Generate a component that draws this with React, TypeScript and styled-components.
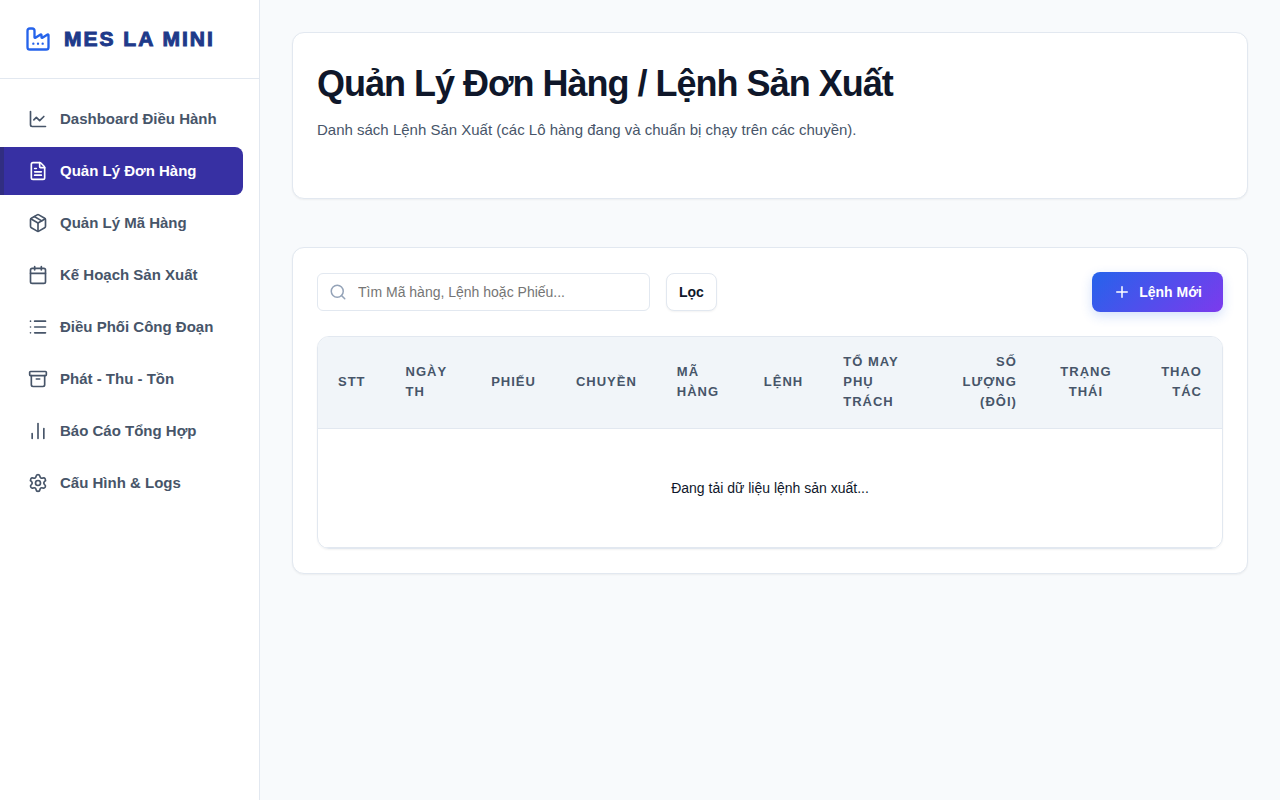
import React from "react";
import styled, { createGlobalStyle } from "styled-components";
import {
  Archive,
  Calendar,
  ChartLine,
  ChartNoAxesColumn,
  FileText,
  List,
  Package,
  Plus,
  Search,
  Settings,
} from "lucide-react";

const GlobalStyle = createGlobalStyle`
  *, *::before, *::after { box-sizing: border-box; }
  body {
    margin: 0;
    background: #f8fafc;
    color: #0f172a;
    font-family: "Liberation Sans", Arial, sans-serif;
    font-size: 15px;
    line-height: 24px;
  }
  button, input { font-family: inherit; }
`;

const Layout = styled.div`
  display: flex;
  min-height: 100vh;
`;

const Sidebar = styled.aside`
  flex: 0 0 260px;
  background: #ffffff;
  border-right: 1px solid #e2e8f0;
`;

const Brand = styled.div`
  display: flex;
  align-items: center;
  gap: 12px;
  padding: 24px;
  border-bottom: 1px solid #e2e8f0;
  color: #2563eb;
`;

const BrandName = styled.span`
  color: #1e3a8a;
  font-size: 21px;
  font-weight: 900;
  line-height: 30px;
  letter-spacing: 2px;
  white-space: nowrap;
  -webkit-text-stroke: 1px currentColor;
`;

const Nav = styled.nav`
  display: flex;
  flex-direction: column;
  gap: 4px;
  padding: 16px 16px 16px 0;
`;

const NavLink = styled.a<{ $active?: boolean }>`
  display: flex;
  align-items: center;
  gap: 12px;
  padding: 12px 24px;
  border-left: 4px solid ${(p) => (p.$active ? "#312e81" : "transparent")};
  border-radius: 0 8px 8px 0;
  background: ${(p) => (p.$active ? "#3730a3" : "transparent")};
  color: ${(p) => (p.$active ? "#ffffff" : "#475569")};
  font-weight: 600;
  text-decoration: none;
  white-space: nowrap;
`;

const Main = styled.main`
  flex: 1;
  min-width: 0;
  display: flex;
  flex-direction: column;
  gap: 48px;
  padding: 32px;
`;

const Card = styled.section`
  padding: 24px;
  background: #ffffff;
  border: 1px solid #e2e8f0;
  border-radius: 12px;
  box-shadow: 0 1px 2px rgba(0, 0, 0, 0.05);
`;

const PageHeader = styled(Card)`
  padding-bottom: 56px;
`;

const Title = styled.h1`
  margin: 0 0 8px;
  font-size: 36px;
  font-weight: 800;
  line-height: 53px;
  letter-spacing: -1px;
`;

const Subtitle = styled.p`
  margin: 0;
  color: #475569;
`;

const Toolbar = styled.div`
  display: flex;
  align-items: center;
  gap: 16px;
  margin-bottom: 24px;
`;

const SearchBox = styled.label`
  display: flex;
  align-items: center;
  gap: 11px;
  flex: 0 1 333px;
  height: 38px;
  padding: 0 11px;
  border: 1px solid #e2e8f0;
  border-radius: 6px;
  color: #94a3b8;
`;

const SearchInput = styled.input`
  flex: 1;
  min-width: 0;
  padding: 0;
  border: 0;
  outline: 0;
  background: transparent;
  color: #0f172a;
  font-size: 14px;

  &::placeholder { color: #757575; }
`;

const FilterButton = styled.button`
  height: 38px;
  padding: 0 12px;
  background: #ffffff;
  border: 1px solid #e2e8f0;
  border-radius: 8px;
  box-shadow: 0 1px 2px rgba(0, 0, 0, 0.05);
  color: #0f172a;
  font-size: 14px;
  font-weight: 600;
`;

const PrimaryButton = styled.button`
  display: flex;
  align-items: center;
  gap: 8px;
  height: 40px;
  margin-left: auto;
  padding: 0 21px;
  border: 0;
  border-radius: 8px;
  background: linear-gradient(135deg, #2563eb 0%, #7c3aed 100%);
  box-shadow: 0 4px 12px rgba(37, 99, 235, 0.2);
  color: #ffffff;
  font-size: 14px;
  font-weight: 600;
`;

const TableFrame = styled.div`
  overflow: hidden;
  border: 1px solid #e2e8f0;
  border-radius: 12px;
  box-shadow: 0 1px 2px rgba(0, 0, 0, 0.05);
`;

const Table = styled.table`
  width: 100%;
  border-spacing: 0;
`;

const HeadCell = styled.th<{ $align?: "left" | "center" | "right" }>`
  padding: 15px 20px 16px;
  background: #f1f5f9;
  border-bottom: 1px solid #e2e8f0;
  color: #475569;
  font-size: 13px;
  font-weight: 700;
  line-height: 20px;
  letter-spacing: 1px;
  text-align: ${(p) => p.$align ?? "left"};
  text-transform: uppercase;
`;

const MessageCell = styled.td`
  padding: 48px 20px;
  border-bottom: 1px solid #e2e8f0;
  font-size: 14px;
  line-height: 22px;
  text-align: center;
`;

function FactoryLogo() {
  return (
    <svg
      width="28"
      height="28"
      viewBox="0 0 24 24"
      fill="none"
      stroke="currentColor"
      strokeWidth="2"
      strokeLinecap="round"
      strokeLinejoin="round"
      aria-hidden="true"
    >
      <path d="M8 16h.01M12 16h.01M16 16h.01" />
      <path d="M3 19a2 2 0 0 0 2 2h14a2 2 0 0 0 2-2V8.5a.5.5 0 0 0-.769-.422l-4.462 2.844A.5.5 0 0 1 15 10.5v-2a.5.5 0 0 0-.769-.422L9.77 10.922A.5.5 0 0 1 9 10.5V5a2 2 0 0 0-2-2H5a2 2 0 0 0-2 2z" />
    </svg>
  );
}

const navItems = [
  { label: "Dashboard Điều Hành", Icon: ChartLine },
  { label: "Quản Lý Đơn Hàng", Icon: FileText, active: true },
  { label: "Quản Lý Mã Hàng", Icon: Package },
  { label: "Kế Hoạch Sản Xuất", Icon: Calendar },
  { label: "Điều Phối Công Đoạn", Icon: List },
  { label: "Phát - Thu - Tồn", Icon: Archive },
  { label: "Báo Cáo Tổng Hợp", Icon: ChartNoAxesColumn },
  { label: "Cấu Hình & Logs", Icon: Settings },
];

const columns: { label: string; align?: "left" | "center" | "right" }[] = [
  { label: "STT" },
  { label: "Ngày TH" },
  { label: "Phiếu" },
  { label: "Chuyền" },
  { label: "Mã Hàng" },
  { label: "Lệnh" },
  { label: "Tổ May Phụ Trách" },
  { label: "Số Lượng (Đôi)", align: "right" },
  { label: "Trạng Thái", align: "center" },
  { label: "Thao Tác", align: "right" },
];

export default function App() {
  return (
    <Layout>
      <GlobalStyle />
      <Sidebar>
        <Brand>
          <FactoryLogo />
          <BrandName>MES LA MINI</BrandName>
        </Brand>
        <Nav>
          {navItems.map(({ label, Icon, active }) => (
            <NavLink key={label} href="#" $active={active} aria-current={active ? "page" : undefined}>
              <Icon size={20} />
              {label}
            </NavLink>
          ))}
        </Nav>
      </Sidebar>
      <Main>
        <PageHeader>
          <Title>Quản Lý Đơn Hàng / Lệnh Sản Xuất</Title>
          <Subtitle>Danh sách Lệnh Sản Xuất (các Lô hàng đang và chuẩn bị chạy trên các chuyền).</Subtitle>
        </PageHeader>
        <Card>
          <Toolbar>
            <SearchBox>
              <Search size={18} />
              <SearchInput
                type="text"
                aria-label="Tìm Mã hàng, Lệnh hoặc Phiếu"
                placeholder="Tìm Mã hàng, Lệnh hoặc Phiếu..."
              />
            </SearchBox>
            <FilterButton type="button">Lọc</FilterButton>
            <PrimaryButton type="button">
              <Plus size={18} />
              Lệnh Mới
            </PrimaryButton>
          </Toolbar>
          <TableFrame>
            <Table>
              <thead>
                <tr>
                  {columns.map(({ label, align }) => (
                    <HeadCell key={label} scope="col" $align={align}>
                      {label}
                    </HeadCell>
                  ))}
                </tr>
              </thead>
              <tbody>
                <tr>
                  <MessageCell colSpan={columns.length}>Đang tải dữ liệu lệnh sản xuất...</MessageCell>
                </tr>
              </tbody>
            </Table>
          </TableFrame>
        </Card>
      </Main>
    </Layout>
  );
}
